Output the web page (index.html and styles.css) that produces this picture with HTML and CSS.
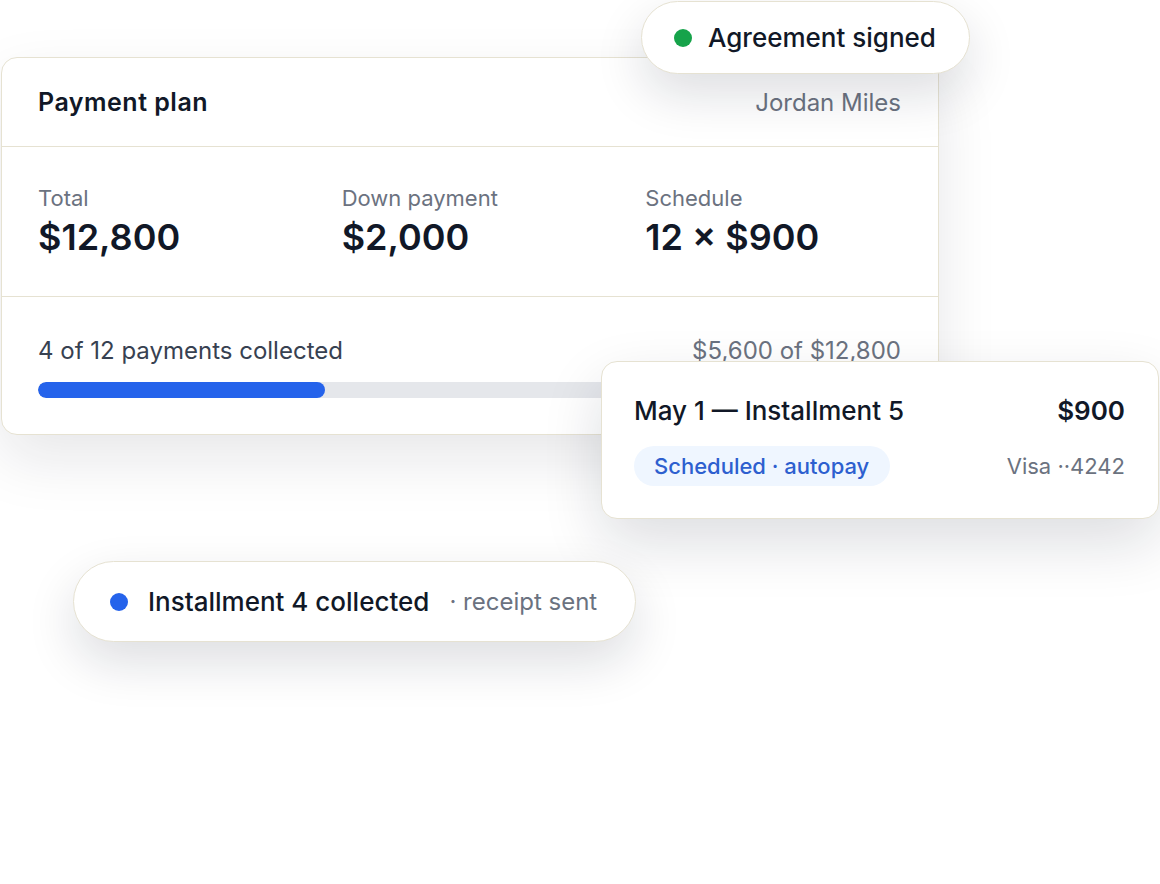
FILE: index.html
```html
<!DOCTYPE html>
<html>
<head>
<meta name="viewport" content="width=device-width, initial-scale=1.0"/>
<link rel="stylesheet" href="styles.css">
</head>
<body>

    <div class="stage">

        <div class="planCard">
            <div class="planHead">
                <span class="planTitle">Payment plan</span>
                <span class="planClient">Jordan Miles</span>
            </div>
            <div class="planStats">
                <div class="stat">
                    <span class="statLabel">Total</span>
                    <span class="statValue">$12,800</span>
                </div>
                <div class="stat">
                    <span class="statLabel">Down payment</span>
                    <span class="statValue">$2,000</span>
                </div>
                <div class="stat">
                    <span class="statLabel">Schedule</span>
                    <span class="statValue">12 × $900</span>
                </div>
            </div>
            <div class="planProgress">
                <div class="progressRow">
                    <span class="progressText">4 of 12 payments collected</span>
                    <span class="progressAmount">$5,600 of $12,800</span>
                </div>
                <div class="bar"><div class="barFill" style="width: 33.2%;"></div></div>
            </div>
        </div>

        <div class="pill pillSigned">
            <span class="dot dotGreen"></span>
            <span class="pillText">Agreement signed</span>
        </div>

        <div class="nextCard">
            <div class="nextRow">
                <span class="nextTitle">May 1 — Installment 5</span>
                <span class="nextAmount">$900</span>
            </div>
            <div class="nextRow">
                <span class="badge">Scheduled · autopay</span>
                <span class="nextCardNo">Visa ··4242</span>
            </div>
        </div>

        <div class="pill pillCollected">
            <span class="dot dotBlue"></span>
            <span class="pillText">Installment 4 collected</span>
            <span class="pillNote">· receipt sent</span>
        </div>

    </div>

</body>
</html>
```

FILE: styles.css
```css
body {
    margin: 0;
    background: #ffffff;
    font-family: Inter, "Noto Sans", sans-serif;
    color: #111827;
}

.stage {
    position: relative;
    width: 1160px;
    height: 884px;
    overflow: hidden;
}

/* main card */
.planCard {
    margin: 57px 0 0 1px;
    width: 936px;
    background: #ffffff;
    border: 1px solid #e6e2d2;
    border-radius: 16px;
    box-shadow: 0 24px 60px rgba(17, 24, 39, 0.10);
}

.planHead {
    display: flex;
    justify-content: space-between;
    align-items: center;
    height: 88px;
    padding: 0 37px 0 36px;
    border-bottom: 1px solid #e6e2d2;
}

.planTitle {
    font-size: 25px;
    font-weight: 600;
    letter-spacing: 0.5px;
    color: #111827;
}

.planClient {
    font-size: 24px;
    color: #6b7280;
}

.planStats {
    display: grid;
    grid-template-columns: 1fr 1fr 1fr;
    gap: 48px;
    padding: 38px 37px 37px 36px;
    border-bottom: 1px solid #e6e2d2;
}

.stat {
    display: flex;
    flex-direction: column;
    gap: 4px;
}

.statLabel {
    font-size: 22px;
    line-height: 26px;
    color: #6b7280;
}

.statValue {
    font-size: 36px;
    line-height: 44px;
    font-weight: 600;
    color: #111827;
}

.planProgress {
    padding: 38px 37px 36px 36px;
}

.progressRow {
    display: flex;
    justify-content: space-between;
    align-items: center;
    height: 30px;
    margin-bottom: 17px;
}

.progressText {
    font-size: 24px;
    color: #374151;
}

.progressAmount {
    font-size: 24px;
    color: #6b7280;
}

.bar {
    height: 16px;
    border-radius: 8px;
    background: #e5e7eb;
    overflow: hidden;
}

.barFill {
    height: 100%;
    border-radius: 8px;
    background: #2563eb;
}

/* floating pills */
.pill {
    position: absolute;
    display: flex;
    align-items: center;
    box-sizing: border-box;
    background: #ffffff;
    border: 1px solid #e6e2d2;
    border-radius: 999px;
    box-shadow: 0 20px 50px rgba(17, 24, 39, 0.14);
}

.pillSigned {
    left: 641px;
    top: 1px;
    height: 73px;
    padding: 0 33px 0 32px;
    gap: 16px;
}

.pillCollected {
    left: 73px;
    top: 561px;
    height: 81px;
    padding: 0 38px 0 36px;
    gap: 20px;
}

.dot {
    width: 18px;
    height: 18px;
    border-radius: 50%;
}

.dotGreen {
    background: #16a34a;
}

.dotBlue {
    background: #2563eb;
}

.pillText {
    font-size: 26px;
    font-weight: 500;
    color: #111827;
}

.pillNote {
    margin-left: 0;
    font-size: 24px;
    color: #6b7280;
}

/* next installment card */
.nextCard {
    position: absolute;
    left: 601px;
    top: 361px;
    width: 491px;
    padding: 33px 33px 32px 32px;
    display: flex;
    flex-direction: column;
    gap: 19px;
    background: #ffffff;
    border: 1px solid #e6e2d2;
    border-radius: 16px;
    box-shadow: 0 24px 60px rgba(17, 24, 39, 0.14);
}

.nextRow {
    display: flex;
    justify-content: space-between;
    align-items: center;
}

.nextTitle {
    font-size: 26px;
    line-height: 32px;
    font-weight: 500;
    color: #111827;
}

.nextAmount {
    font-size: 26px;
    line-height: 32px;
    font-weight: 600;
    color: #111827;
}

.badge {
    padding: 7px 21px 7px 20px;
    line-height: 26px;
    border-radius: 999px;
    background: #eff6ff;
    font-size: 22px;
    font-weight: 500;
    color: #2d5fcf;
}

.nextCardNo {
    font-size: 22px;
    color: #6b7280;
}
```
